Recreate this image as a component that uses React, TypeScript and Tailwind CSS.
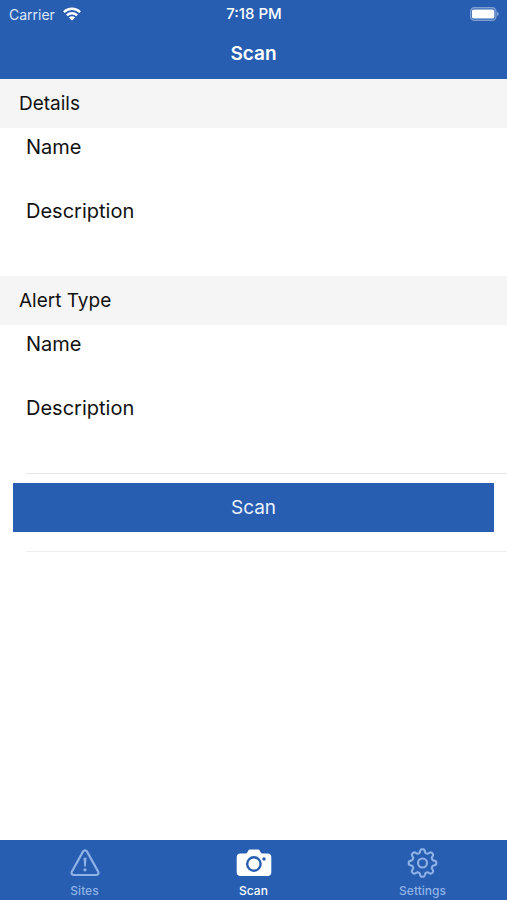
import React, { useId, useState } from "react";

function WifiIcon() {
  return (
    <svg width="18" height="14" viewBox="0 0 18 14" fill="none" stroke="#fff" strokeWidth="2.5" aria-hidden="true">
      <path d="M0.9 5.1a11.6 11.6 0 0 1 16.2 0" />
      <path d="M3.9 8.3a7.3 7.3 0 0 1 10.2 0" />
      <path d="M9 13.6L5.9 10.6a4.4 4.4 0 0 1 6.2 0z" fill="#fff" stroke="none" />
    </svg>
  );
}

function BatteryIcon() {
  return (
    <svg width="30" height="14" viewBox="0 0 30 14" aria-hidden="true">
      <rect x="1.7" y="0.7" width="25.2" height="12.6" rx="3.6" fill="none" stroke="#7f9fd2" strokeWidth="1.4" />
      <rect x="3" y="2.4" width="22.4" height="9.2" rx="1.6" fill="#fff" />
      <path d="M28 4.8c1.2.4 1.9 1.2 1.9 2.2s-.7 1.8-1.9 2.2z" fill="#7f9fd2" />
    </svg>
  );
}

function AlertIcon() {
  return (
    <svg width="36" height="32" viewBox="0 0 36 32" fill="none" stroke="currentColor" strokeWidth="2.2" strokeLinejoin="round" aria-hidden="true">
      <path d="M16.1 4.4a2.2 2.2 0 0 1 3.8 0l11.3 20.3a2.2 2.2 0 0 1-1.9 3.3H6.7a2.2 2.2 0 0 1-1.9-3.3z" />
      <path d="M16.5 10.8h3l-.7 8.8h-1.6z" fill="currentColor" stroke="none" />
      <circle cx="18" cy="22.8" r="1.6" fill="currentColor" stroke="none" />
    </svg>
  );
}

function CameraIcon() {
  return (
    <svg width="36" height="32" viewBox="0 0 36 32" fill="none" aria-hidden="true">
      <path
        d="M4.2 6.4h5.2c.9 0 1.5-.4 2-1.2l.7-1.3c.5-.8 1.1-1.3 2.1-1.3h7.6c1 0 1.6.5 2.1 1.3l.7 1.3c.5.8 1.1 1.2 2 1.2h5.2c2 0 3.5 1.5 3.5 3.5v15.6c0 2-1.5 3.5-3.5 3.5H4.2c-2 0-3.5-1.5-3.5-3.5V9.9c0-2 1.5-3.5 3.5-3.5z"
        fill="#fff"
      />
      <circle cx="17.9" cy="17" r="6.7" stroke="#275eb2" strokeWidth="2.4" />
      <circle cx="28" cy="12" r="1.7" fill="#275eb2" />
    </svg>
  );
}

function gearOutline(cx: number, cy: number, radius: number, depth: number) {
  const steps = 192;
  const points: string[] = [];
  for (let i = 0; i < steps; i++) {
    const angle = (i / steps) * Math.PI * 2;
    const wave = Math.tanh(1.8 * Math.cos(angle * 8));
    const r = radius + depth * wave;
    points.push(`${(cx + r * Math.cos(angle)).toFixed(2)} ${(cy + r * Math.sin(angle)).toFixed(2)}`);
  }
  return `M${points.join("L")}Z`;
}

const gearPath = gearOutline(17.5, 16, 12.1, 1.8);

function GearIcon() {
  return (
    <svg width="36" height="32" viewBox="0 0 36 32" fill="none" stroke="currentColor" strokeWidth="2.1" strokeLinejoin="round" aria-hidden="true">
      <path d={gearPath} />
      <circle cx="17.5" cy="16" r="4.5" />
    </svg>
  );
}

function Field({ label }: { label: string }) {
  const id = useId();
  const [value, setValue] = useState("");
  return (
    <div className="flex flex-col px-[26px]">
      <label htmlFor={id} className="text-[20px] leading-[38px]">
        {label}
      </label>
      <input
        id={id}
        type="text"
        value={value}
        onChange={(e) => setValue(e.target.value)}
        className="h-[26px] w-full bg-transparent text-base outline-none"
      />
    </div>
  );
}

function Section({ title }: { title: string }) {
  return (
    <section>
      <h2 className="bg-[#f5f5f5] px-[19px] text-[19px] leading-[49px]">{title}</h2>
      <div className="pb-5">
        <Field label="Name" />
        <Field label="Description" />
      </div>
    </section>
  );
}

const tabs = [
  { name: "Sites", icon: <AlertIcon />, active: false },
  { name: "Scan", icon: <CameraIcon />, active: true },
  { name: "Settings", icon: <GearIcon />, active: false },
];

export default function App() {
  return (
    <div className="flex min-h-screen flex-col bg-white font-['Inter','Liberation_Sans',sans-serif] text-[#111]">
      <header className="bg-[#275eb2] text-white">
        <div className="grid h-7 grid-cols-3 items-center pr-2 pl-[9px] text-[14px]">
          <div className="flex items-center gap-2 text-[#dce7f7]">
            <span>Carrier</span>
            <WifiIcon />
          </div>
          <time className="text-center text-[15px] font-medium">7:18 PM</time>
          <div className="flex justify-end">
            <BatteryIcon />
          </div>
        </div>
        <h1 className="text-center text-[19px] font-semibold leading-[51px]">Scan</h1>
      </header>

      <main className="grow">
        <form onSubmit={(e) => e.preventDefault()}>
          <Section title="Details" />
          <Section title="Alert Type" />
          <hr className="ml-[26px] border-[#e8e8e8]" />
          <div className="px-[13px] pt-[9px] pb-[19px]">
            <button type="submit" className="block h-[49px] w-full bg-[#275eb2] pt-0.5 text-[19px] text-[#eaf1fb]">
              Scan
            </button>
          </div>
          <hr className="ml-[26px] border-[#ededed]" />
        </form>
      </main>

      <nav className="grid h-[60px] grid-cols-3 bg-[#275eb2]">
        {tabs.map((tab) => (
          <a
            key={tab.name}
            href={`#${tab.name.toLowerCase()}`}
            aria-current={tab.active ? "page" : undefined}
            className={
              tab.active
                ? "flex flex-col items-center gap-1 pt-[7px] text-[12px] font-medium leading-4 text-white"
                : "flex flex-col items-center gap-1 pt-[7px] text-[12px] font-medium leading-4 text-[#8fb2e6]"
            }
          >
            {tab.icon}
            <span>{tab.name}</span>
          </a>
        ))}
      </nav>
    </div>
  );
}
